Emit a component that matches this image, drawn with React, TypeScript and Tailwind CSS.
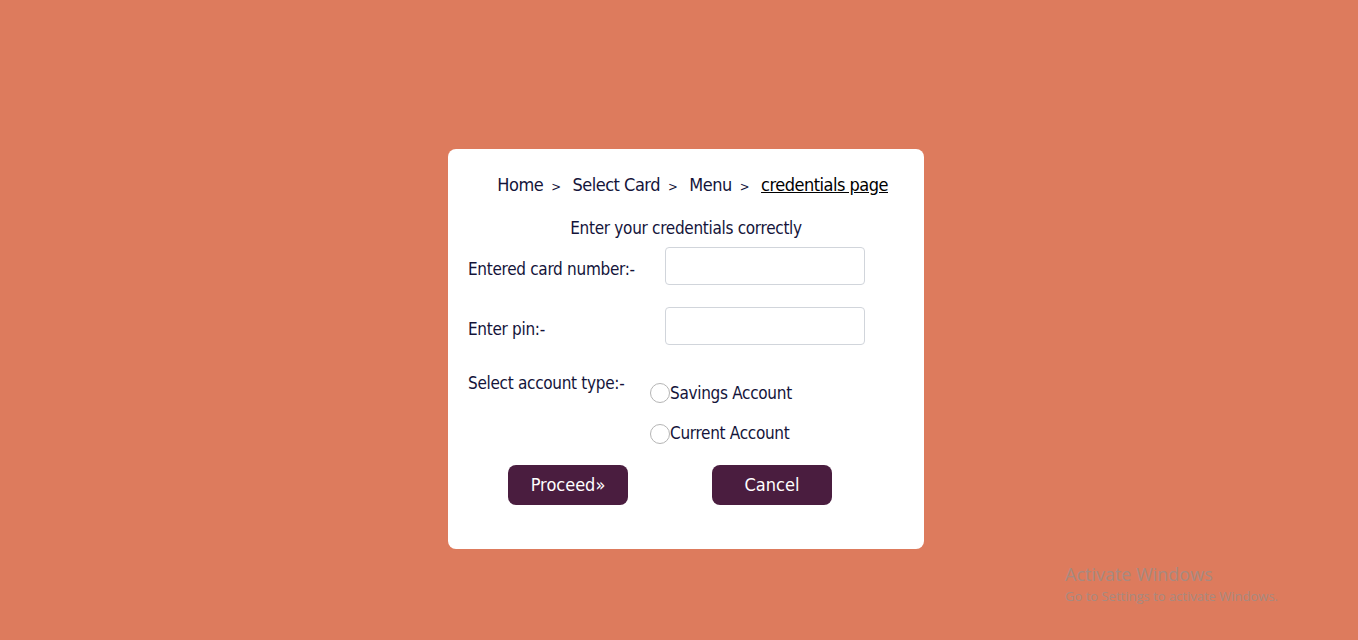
import React from 'react';

const crumbs = ['Home', 'Select Card', 'Menu'];

export default function App() {
  return (
    <div
      className="relative w-full h-[640px] bg-[#dd7b5d] flex items-start justify-center pt-[149px] pl-[14px] text-[#14143a]"
      style={{ fontFamily: '"DejaVu Sans Condensed", "Liberation Sans Narrow", "Noto Sans", sans-serif' }}
    >
      <div className="w-[476px] h-[400px] bg-white rounded-lg px-5 pt-[22px]">
        {/* Breadcrumb */}
        <div className="flex items-baseline justify-end pr-[16px] text-[18px] font-light tracking-[-0.5px]">
          {crumbs.map((c) => (
            <span key={c} className="flex items-baseline">
              <span>{c}</span>
              <span className="text-[13px] ml-[8px] mr-[12px]">&gt;</span>
            </span>
          ))}
          <a className="underline text-black">credentials page</a>
        </div>

        <div className="text-center text-[17px] font-light mt-[18px] tracking-[-0.3px]">
          Enter your credentials correctly
        </div>

        {/* Card number */}
        <div className="flex items-center mt-[5px]">
          <label className="w-[197px] text-[17px] font-light tracking-[-0.3px] pt-[8px]">Entered card number:-</label>
          <input className="w-[200px] h-[38px] border border-[#d1d5db] rounded-[4px] outline-none" />
        </div>

        {/* Pin */}
        <div className="flex items-center mt-[22px]">
          <label className="w-[197px] text-[17px] font-light tracking-[-0.3px] pt-[8px]">Enter pin:-</label>
          <input type="password" className="w-[200px] h-[38px] border border-[#d1d5db] rounded-[4px] outline-none" />
        </div>

        {/* Account type */}
        <div className="flex mt-[26px]">
          <div className="w-[182px] text-[17px] font-light tracking-[-0.3px]">Select account type:-</div>
          <div className="flex flex-col gap-[15px] pt-[10px]">
            {['Savings Account', 'Current Account'].map((t) => (
              <label key={t} className="flex items-center text-[17px] font-light tracking-[-0.3px]">
                <span className="w-[20px] h-[20px] rounded-full border border-[#b5b5b5] bg-white" />
                <span>{t}</span>
              </label>
            ))}
          </div>
        </div>

        {/* Buttons */}
        <div className="flex mt-[18px] pl-[40px] gap-[84px]">
          <button className="w-[120px] h-[40px] rounded-lg bg-[#4a1d3f] text-white text-[18px] font-light">
            Proceed»
          </button>
          <button className="w-[120px] h-[40px] rounded-lg bg-[#4a1d3f] text-white text-[18px] font-light">
            Cancel
          </button>
        </div>
      </div>

      {/* Windows watermark */}
      <div
        className="absolute left-[1065px] top-[562px] text-[#a78a80]"
        style={{ fontFamily: '"Open Sans", "Noto Sans", sans-serif' }}
      >
        <div className="text-[18px] leading-[24px]">Activate Windows</div>
        <div className="text-[13px] leading-[20px]">Go to Settings to activate Windows.</div>
      </div>
    </div>
  );
}
